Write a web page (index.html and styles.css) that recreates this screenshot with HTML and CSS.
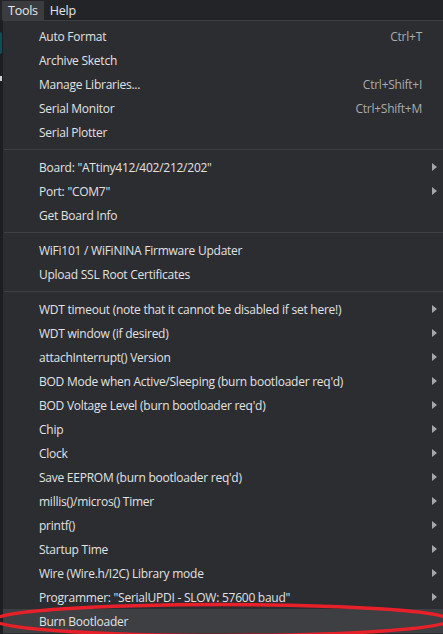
FILE: index.html
```html
<!DOCTYPE html>
<html>
<head>
<meta charset="utf-8">
<link rel="stylesheet" href="styles.css">
</head>
<body>
<div class="menubar">
  <span class="top-item active">Tools</span>
  <span class="top-item">Help</span>
</div>
<div class="content">
  <div class="edge">
    <span class="teal"></span>
    <span class="tick"></span>
  </div>
  <div class="menu">
    <div class="row"><span class="label">Auto Format</span><span class="key">Ctrl+T</span></div>
    <div class="row"><span class="label">Archive Sketch</span></div>
    <div class="row"><span class="label">Manage Libraries...</span><span class="key">Ctrl+Shift+I</span></div>
    <div class="row"><span class="label">Serial Monitor</span><span class="key">Ctrl+Shift+M</span></div>
    <div class="row"><span class="label">Serial Plotter</span></div>
    <div class="sep"></div>
    <div class="row sub"><span class="label">Board: "ATtiny412/402/212/202"</span></div>
    <div class="row sub"><span class="label">Port: "COM7"</span></div>
    <div class="row"><span class="label">Get Board Info</span></div>
    <div class="sep"></div>
    <div class="row"><span class="label">WiFi101 / WiFiNINA Firmware Updater</span></div>
    <div class="row"><span class="label">Upload SSL Root Certificates</span></div>
    <div class="sep"></div>
    <div class="row sub"><span class="label">WDT timeout (note that it cannot be disabled if set here!)</span></div>
    <div class="row sub"><span class="label">WDT window (if desired)</span></div>
    <div class="row sub"><span class="label">attachInterrupt() Version</span></div>
    <div class="row sub"><span class="label">BOD Mode when Active/Sleeping (burn bootloader req'd)</span></div>
    <div class="row sub"><span class="label">BOD Voltage Level (burn bootloader req'd)</span></div>
    <div class="row sub"><span class="label">Chip</span></div>
    <div class="row sub"><span class="label">Clock</span></div>
    <div class="row sub"><span class="label">Save EEPROM (burn bootloader req'd)</span></div>
    <div class="row sub"><span class="label">millis()/micros() Timer</span></div>
    <div class="row sub"><span class="label">printf()</span></div>
    <div class="row sub"><span class="label">Startup Time</span></div>
    <div class="row sub"><span class="label">Wire (Wire.h/I2C) Library mode</span></div>
    <div class="row sub"><span class="label">Programmer: "SerialUPDI - SLOW: 57600 baud"</span></div>
    <div class="row hover"><span class="label">Burn Bootloader</span></div>
  </div>
</div>
<svg class="circle" width="443" height="40" viewBox="0 0 443 40">
  <ellipse cx="222" cy="21" rx="228" ry="15.5" fill="none" stroke="#e8202a" stroke-width="3.5"/>
</svg>
</body>
</html>
```
FILE: styles.css
```css
html, body {
  margin: 0;
  padding: 0;
}
body {
  width: 443px;
  height: 634px;
  overflow: hidden;
  background: #2b2d31;
  font-family: "Open Sans", "Noto Sans", sans-serif;
  font-size: 12px;
  letter-spacing: -0.25px;
  color: #e2e2e2;
  position: relative;
}
.menubar {
  height: 20px;
  background: #232427;
  display: flex;
  align-items: stretch;
  padding-left: 2px;
  padding-top: 1px;
  box-sizing: border-box;
}
.top-item {
  display: flex;
  align-items: center;
  padding: 0 6px;
  color: #e6e6e6;
  font-size: 12.5px;
}
.top-item.active {
  background: #3a3c40;
}
.content {
  display: flex;
}
.edge {
  width: 3px;
  background: #1d1e21;
  position: relative;
  height: 614px;
}
.teal {
  position: absolute;
  left: 0;
  top: 12px;
  width: 2px;
  height: 22px;
  background: #0e4e55;
  border-radius: 0 3px 3px 0;
}
.tick {
  position: absolute;
  left: 0;
  top: 56px;
  width: 2px;
  height: 5px;
  background: #d0d0d0;
}
.menu {
  flex: 1;
  border-top: 1px solid #3c3e42;
  padding-top: 3px;
  background: #2b2d31;
}
.row {
  height: 24px;
  display: flex;
  align-items: center;
  padding-left: 36px;
  padding-right: 21px;
  position: relative;
  white-space: nowrap;
}
.label {
  flex: 1;
}
.key {
  color: #a9abae;
}
.sub::after {
  content: "";
  position: absolute;
  right: 6px;
  top: 8px;
  border-left: 5px solid #a3a6aa;
  border-top: 4px solid transparent;
  border-bottom: 4px solid transparent;
}
.hover {
  background: #3d3f43;
}
.sep {
  height: 11px;
  display: flex;
  align-items: center;
}
.sep::before {
  content: "";
  display: block;
  flex: 1;
  height: 1px;
  margin-left: 1px;
  background: #3e4044;
}
.circle {
  position: absolute;
  left: 0;
  top: 599px;
}
```
